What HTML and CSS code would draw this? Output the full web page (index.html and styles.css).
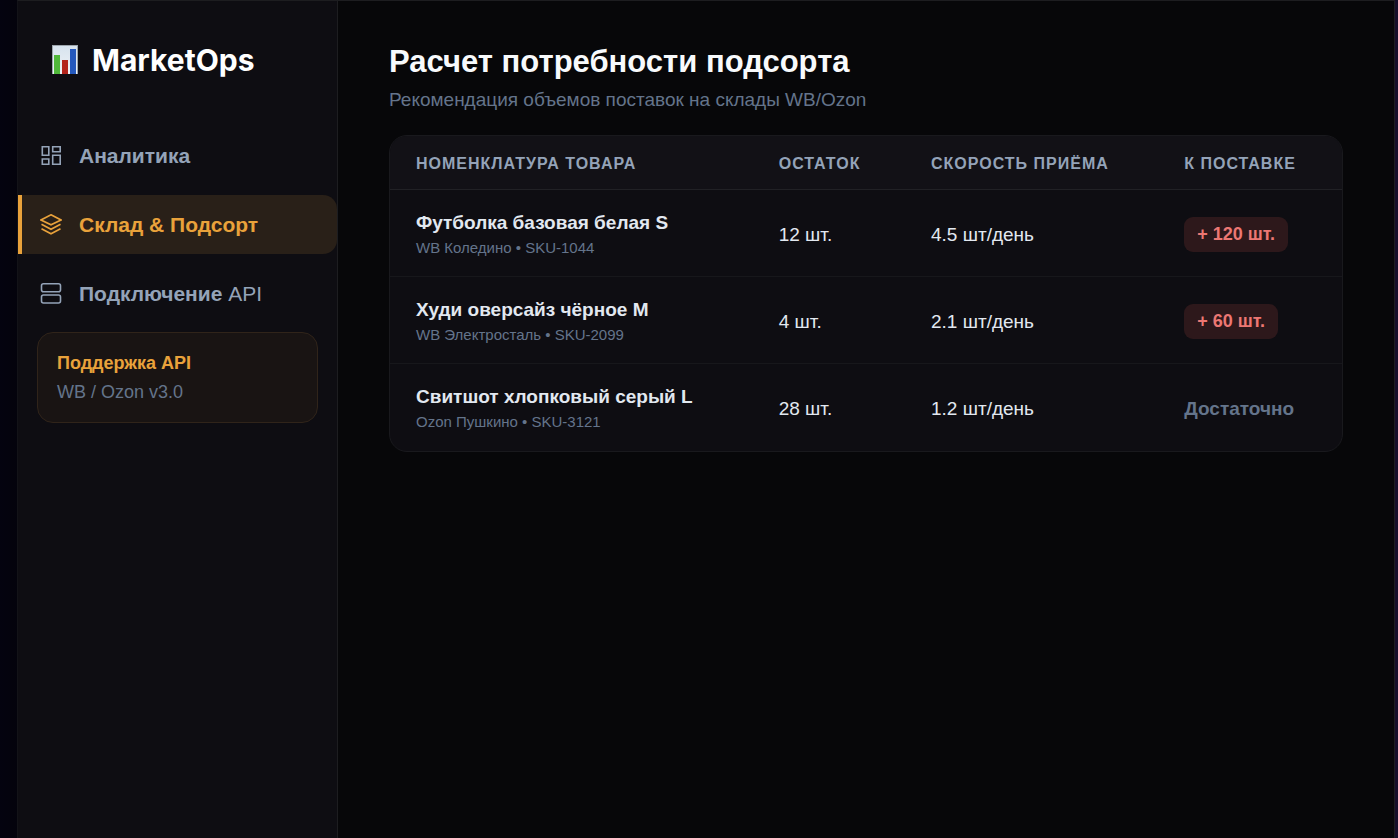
FILE: index.html
```html
<!DOCTYPE html>
<html lang="ru">
<head>
<meta charset="utf-8">
<meta name="viewport" content="width=device-width, initial-scale=1">
<title>MarketOps</title>
<link rel="stylesheet" href="styles.css">
</head>
<body>
<div class="app">
  <aside class="sidebar">
    <div class="brand">
      <svg class="brand-icon" viewBox="0 0 26 30" aria-hidden="true">
        <defs>
          <linearGradient id="paper" x2="0" y2="1"><stop stop-color="#d7e3ee"/><stop offset="1" stop-color="#eef2f6"/></linearGradient>
        </defs>
        <rect width="26" height="29" fill="#9da5ac"/>
        <rect x="1" y="1" width="24" height="28" fill="url(#paper)"/>
        <rect x="2" y="10" width="6" height="19" fill="#50b83a"/>
        <rect x="10" y="15" width="6" height="14" fill="#b3241c"/>
        <rect x="18" y="4" width="6" height="25" fill="#2458bd"/>
      </svg>
      <span>MarketOps</span>
    </div>
    <nav class="nav">
      <a class="nav-item" href="#analytics">
        <svg class="nav-icon" viewBox="0 0 22 22" aria-hidden="true"><path d="M2.300 1.800h6.500v8.500H2.300zM12.700 1.800h7.500v5h-7.500zM12.700 10.300h7.500v9h-7.500zM2.300 14h6.500v5.300H2.300z"/></svg>
        <span>Аналитика</span>
      </a>
      <a class="nav-item active" href="#stock" aria-current="page">
        <svg class="nav-icon" viewBox="0 0 22 22" aria-hidden="true"><path d="M11 .8 21 6l-10 4.800L1 6zM1.500 10.300l9.500 5 9.500-5M1.500 14.800l9.500 5 9.500-5"/></svg>
        <span>Склад &amp; Подсорт</span>
      </a>
      <a class="nav-item" href="#api">
        <svg class="nav-icon" viewBox="0 0 22 22" aria-hidden="true"><rect x="1.500" y=".8" width="19" height="8" rx="2"/><rect x="1.500" y="12" width="19" height="8" rx="2"/></svg>
        <span>Подключение <span class="light">API</span></span>
      </a>
    </nav>
    <div class="support">
      <strong>Поддержка API</strong>
      <span>WB / Ozon v3.0</span>
    </div>
  </aside>
  <main class="main">
    <h1>Расчет потребности подсорта</h1>
    <p class="subtitle">Рекомендация объемов поставок на склады WB/Ozon</p>
    <div class="card">
      <table>
        <thead>
          <tr><th class="col-name">Номенклатура товара</th><th class="col-stock">Остаток</th><th class="col-speed">Скорость приёма</th><th>К поставке</th></tr>
        </thead>
        <tbody>
          <tr><td><div class="name">Футболка базовая белая S</div><div class="sku">WB Коледино • SKU-1044</div></td><td>12 шт.</td><td>4.5 шт/день</td><td><span class="badge">+ 120 шт.</span></td></tr>
          <tr><td><div class="name">Худи оверсайз чёрное M</div><div class="sku">WB Электросталь • SKU-2099</div></td><td>4 шт.</td><td>2.1 шт/день</td><td><span class="badge">+ 60 шт.</span></td></tr>
          <tr><td><div class="name">Свитшот хлопковый серый L</div><div class="sku">Ozon Пушкино • SKU-3121</div></td><td>28 шт.</td><td>1.2 шт/день</td><td><span class="enough">Достаточно</span></td></tr>
        </tbody>
      </table>
    </div>
  </main>
</div>
</body>
</html>
```
FILE: styles.css
```css
* { box-sizing: border-box; }

body {
  margin: 0;
  padding: 0 3px 0 17px;
  background: linear-gradient(90deg, #04030f, #04030c 17px, #160f2a);
  color: #e2e8f0;
  font-family: "Liberation Sans", Arial, sans-serif;
}

.app {
  display: flex;
  min-height: 100vh;
  background: #070709;
  border: 1px solid #1d1d20;
  border-bottom: 0;
  border-left-color: #131318;
}

.sidebar {
  flex: 0 0 320px;
  background: #0e0d12;
  border-right: 1px solid #1d1d20;
}

.brand {
  display: flex;
  align-items: center;
  gap: 14px;
  padding: 40px 34px 0;
  color: #fff;
  font: 700 30px/38px Inter, sans-serif;
}

.brand-icon { width: 26px; height: 30px; }

.nav {
  display: flex;
  flex-direction: column;
  gap: 10px;
  padding-top: 47px;
}

.nav-item {
  display: flex;
  align-items: center;
  gap: 17px;
  height: 59px;
  padding-left: 18px;
  border-left: 4px solid transparent;
  border-radius: 0 14px 14px 0;
  color: #94a3b8;
  font-size: 21px;
  font-weight: 700;
  line-height: 27px;
  text-decoration: none;
}

.nav-item.active {
  background: #292018;
  border-left-color: #e9a23b;
  color: #e9a23b;
}

.nav-icon {
  width: 22px;
  height: 22px;
  fill: none;
  stroke: currentColor;
  stroke-width: 1.6;
}

.light { font-weight: 400; }

.support {
  display: flex;
  flex-direction: column;
  margin: 9px 19px 0;
  padding: 16px 19px 15px;
  border: 1px solid #30241a;
  border-radius: 16px;
  background: #191413;
  color: #64748b;
  font-size: 18px;
  line-height: 29px;
}

.support strong { color: #e9a23b; }

.main {
  flex: 1;
  padding: 41px 51px;
}

h1 {
  margin: 0;
  color: #f8fafc;
  font-size: 31px;
  line-height: 40px;
}

.subtitle {
  margin: 5px 0 23px;
  color: #64748b;
  font-size: 19px;
  line-height: 25px;
}

.card {
  overflow: hidden;
  border: 1px solid #19191d;
  border-radius: 18px;
  background: #0e0d12;
}

table {
  width: 100%;
  border-collapse: separate;
  border-spacing: 0;
  table-layout: fixed;
  text-align: left;
}

th {
  height: 54px;
  padding: 2px 0 0 26px;
  border-bottom: 1px solid #212125;
  background: #121116;
  color: #94a3b8;
  font-size: 16px;
  letter-spacing: 1px;
  text-transform: uppercase;
  white-space: nowrap;
}

.col-name { width: 38.100%; }
.col-stock { width: 16%; }
.col-speed { width: 26.600%; }

td {
  height: 87px;
  padding: 3px 0 0 26px;
  border-bottom: 1px solid #17171b;
  font-size: 19px;
}

tr:last-child td { border-bottom-color: transparent; }

.name {
  font-weight: 700;
  line-height: 26px;
}

.sku {
  color: #64748b;
  font-size: 15px;
  line-height: 24px;
}

.badge {
  display: inline-block;
  padding: 0 13px;
  border-radius: 9px;
  background: #2d181b;
  color: #ec7773;
  font-size: 18px;
  font-weight: 700;
  line-height: 35px;
}

.enough {
  color: #64748b;
  font-weight: 700;
}
```
